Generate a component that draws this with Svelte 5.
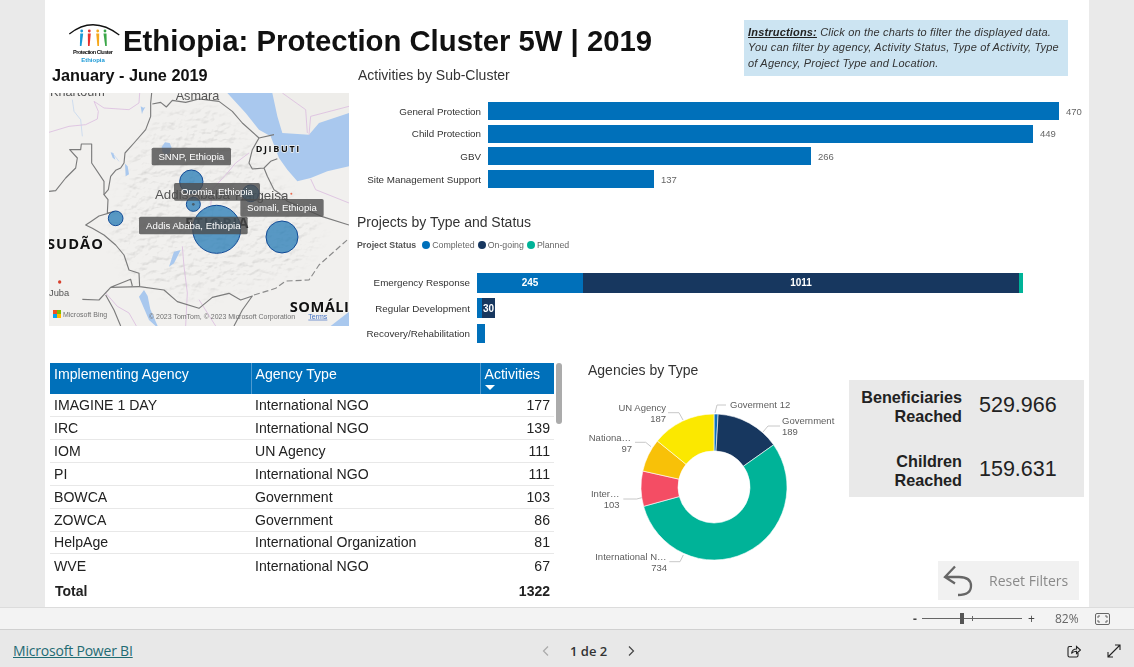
<script>
  const activities = [
    { label: 'General Protection', value: 470, width: 571 },
    { label: 'Child Protection', value: 449, width: 545 },
    { label: 'GBV', value: 266, width: 323 },
    { label: 'Site Management Support', value: 137, width: 166 }
  ];
  const projects = [
    { label: 'Emergency Response', parts: [['c', 106, '245'], ['o', 436, '1011'], ['p', 4, '']] },
    { label: 'Regular Development', parts: [['c', 5, ''], ['o', 13, '30']] },
    { label: 'Recovery/Rehabilitation', parts: [['c', 8, '']] }
  ];
  const agencies = [
    ['IMAGINE 1 DAY', 'International NGO', 177],
    ['IRC', 'International NGO', 139],
    ['IOM', 'UN Agency', 111],
    ['PI', 'International NGO', 111],
    ['BOWCA', 'Government', 103],
    ['ZOWCA', 'Government', 86],
    ['HelpAge', 'International Organization', 81],
    ['WVE', 'International NGO', 67]
  ];
  const slices = [
    [12, '#0f6fb8'], [189, '#17375f'], [734, '#00b398'],
    [103, '#f44d64'], [97, '#f8c108'], [187, '#fbe800']
  ];
  const total = slices.reduce((s, x) => s + x[0], 0);
  function arc(a0, a1) {
    const R = 73, r = 36, cx = 134, cy = 97;
    const p = (rad, a) => `${(cx + rad * Math.sin(a)).toFixed(2)} ${(cy - rad * Math.cos(a)).toFixed(2)}`;
    const large = a1 - a0 > Math.PI ? 1 : 0;
    return `M${p(R, a0)}A${R} ${R} 0 ${large} 1 ${p(R, a1)}L${p(r, a1)}A${r} ${r} 0 ${large} 0 ${p(r, a0)}Z`;
  }
  let acc = 0;
  const segs = slices.map(([v, c]) => {
    const a0 = (acc / total) * Math.PI * 2;
    acc += v;
    return { d: arc(a0, (acc / total) * Math.PI * 2), c };
  });
  const donutLabels = [
    ['start', 150, 18, 'Goverment 12'], ['start', 202, 34, 'Government'], ['start', 202, 45, '189'],
    ['end', 86, 21, 'UN Agency'], ['end', 86, 32, '187'],
    ['end', 51, 51, 'Nationa…'], ['end', 52, 62, '97'],
    ['end', 39.5, 107, 'Inter…'], ['end', 39.5, 118, '103'],
    ['end', 86.5, 170, 'International N…'], ['end', 87, 181, '734']
  ];
  const leaders = [
    '135,23 137,15 146,15', '183,42 188,36 200,36', '103,30 99,22.7 88,22.7',
    '71,56.7 65.7,52.3 55,52.3', '61.7,107.7 56.7,109 43.3,109', '103.3,165 100,171.7 89.3,171.7'
  ];
  const bubbles = [
    [427, 266, 35], [433, 334, 21], [605, 301, 25], [200, 376, 22], [503, 409, 72], [699, 432, 48]
  ];
  const mapLabels = [
    [308, 164, 238, 'SNNP, Ethiopia'], [375, 270, 258, 'Oromia, Ethiopia'],
    [574, 318, 250, 'Somali, Ethiopia'], [270, 371, 326, 'Addis Ababa, Ethiopia']
  ];
  const people = [[81.7, '#1b9ad6', -1], [89.3, '#e8312f', -.5], [97.7, '#f5a81c', .5], [105, '#3aa648', 1]];
</script>

<div class="canvas">
  <div class="upper">
    <div class="brand">
      <svg class="logo" viewBox="66 22 56 42" width="56" height="42">
        <path d="M69.300 34Q93 15 119.300 35" fill="none" stroke="#111" stroke-width="1.300" />
        {#each people as [x, c, t]}
          <circle cx={x} cy="31" r="1.400" fill={c} />
          <path d={`M${x - 1.5} 33.500h3L${x + t + .8} 46h-1.600Z`} fill={c} />
        {/each}
        <text x="93" y="54" class="logo-a" textLength="40">Protection Cluster</text>
        <text x="93" y="62" class="logo-b">Ethiopia</text>
      </svg>
      <h1>Ethiopia: Protection Cluster 5W | 2019</h1>
    </div>

    <div class="instructions">
      <b>Instructions:</b> Click on the charts to filter the displayed data. You can filter by agency, Activity Status, Type of Activity, Type of Agency, Project Type and Location.
    </div>

    <div class="date">January - June 2019</div>
    <h2 class="sub-title">Activities by Sub-Cluster</h2>

    <svg class="map" viewBox="0 0 300 233" width="300" height="233">
      <defs>
        <filter id="relief" x="0" y="0" width="100%" height="100%">
          <feTurbulence type="fractalNoise" baseFrequency="0.035 0.05" numOctaves="5" seed="11" />
          <feDiffuseLighting surfaceScale="3" lighting-color="#fff" diffuseConstant="1.180">
            <feDistantLight azimuth="235" elevation="58" />
          </feDiffuseLighting>
        </filter>
        <filter id="soft"><feGaussianBlur stdDeviation="22" /></filter>
        <mask id="high">
          <path d="M250 190L340 60 480 40 570 110 640 220 700 290 820 400 760 520 600 580 400 620 240 540 190 420 220 300Z" fill="#fff" filter="url(#soft)" />
        </mask>
      </defs>
      <rect width="300" height="233" fill="#f1f0ee" />
      <g transform="scale(.33333)">
        <rect width="900" height="699" class="relief" filter="url(#relief)" mask="url(#high)" />
        <path d="M535 0L590 60 630 110 665 130 690 195 715 230 745 265 785 255 835 235 900 220V0Z" fill="#a9c8ee" />
        <path d="M670 0L685 70 700 120 780 125 810 90 900 60V0Z" fill="#eeedea" />
        <path d="M900 656L845 699H900Z" fill="#a9c8ee" />
        <path d="M338 162l10-14 14 2 6 14-6 16-12 6-10-10Z M285 591l-15 20 30 70 20 18h6l-22-50-8-40Z M375 476l20-5-20 40-15 10Z M185 178l8 2 6 20-8-6Z M228 212l8 8 4 24-10 6Z M275 40l8 4 6-2-8 14-2 8Z" fill="#a9c8ee" />
        <g fill="none" stroke="#bcd2ee" stroke-width="2">
          <path d="M70 20L75 55 95 80 100 130M190 180L210 205" />
        </g>
        <g fill="none" stroke="#dcbfe0" stroke-width="2.600" stroke-linejoin="round">
          <path d="M0 118L60 100 110 95 145 78 148 55 135 25 165 45 240 50 270 30 272 0" />
          <path d="M700 0L770 50 775 120M780 125L785 70 900 40" />
          <path d="M785 258L800 290 900 330M600 180L560 210 535 240 490 290 485 340" />
          <path d="M400 460L405 520 415 600 410 699M450 620L500 699" />
          <path d="M170 600L205 640 240 660 262 699" />
        </g>
        <g fill="none" stroke="#7b7b7b" stroke-width="3.400" stroke-linejoin="round">
          <path d="M308 0L305 30 305 70 290 110 255 150 228 180 225 210 215 225 200 232 185 250 178 290 165 305 177 320 175 360 195 356 150 369 125 386 110 396 130 406 165 426 200 456 225 486 240 531 270 541 272 581 345 591 385 626 450 646 490 613 540 601 575 621 610 609 580 651 555 699" />
          <path d="M0 295L20 293 50 255 80 225 85 195 62 170 95 170 97 153 128 153 128 210 165 265 165 305" />
          <path d="M272 581L185 583 150 621 100 619M170 606L195 651 215 699M185 583L245 559 250 579" />
          <path d="M310 33L335 28 352 42 370 22 410 28 450 18 510 25 550 55 580 90 630 135 675 125M630 135L610 170 600 210 610 228 645 225 665 205 685 197M645 225L655 250 675 290 690 300 715 325 820 371 900 396" />
          <path d="M615 606L680 586 710 564 780 561 810 516 900 436" stroke-dasharray="18 9" stroke="#8a8a8a" />
        </g>
        <g class="map-place">
          <text x="3" y="10" class="large">Khartoum</text>
          <text x="380" y="20" class="large">Asmara</text>
          <text x="318" y="317" class="city">Addis Ababa</text>
          <text x="558" y="320" class="city">Hargeisa</text>
          <text x="0" y="609" class="small">Juba</text>
          <text x="620" y="177" class="country dj">DJIBUTI</text>
          <text x="-6" y="469" class="country">SUDÃO</text>
          <text x="408" y="406" class="country">ETIOPIA</text>
          <text x="722" y="656" class="country tight">SOMÁLI</text>
        </g>
        <circle cx="32" cy="567" r="5" fill="#d8402c" />
        <circle cx="727" cy="302" r="3" fill="#e86a50" />
        {#each bubbles as [x, y, r]}
          <circle cx={x} cy={y} {r} fill="#0f6fb0" fill-opacity=".68" stroke="#124a96" stroke-width="3" />
        {/each}
        <circle cx="433" cy="334" r="4" fill="#444" fill-opacity=".7" />
        {#each mapLabels as [x, y, w, t]}
          <rect {x} {y} width={w} height="53" rx="5" fill="#4c4c4c" fill-opacity=".8" />
          <text x={x + w / 2} y={y + 36} class="pin">{t}</text>
        {/each}
        <rect x="12" y="651" width="12" height="12" fill="#f25022" />
        <rect x="24" y="651" width="12" height="12" fill="#7fba00" />
        <rect x="12" y="663" width="12" height="12" fill="#00a4ef" />
        <rect x="24" y="663" width="12" height="12" fill="#ffb900" />
        <text x="42" y="671" class="attr">Microsoft Bing</text>
        <text x="300" y="677" class="attr">© 2023 TomTom, © 2023 Microsoft Corporation</text>
        <text x="778" y="677" class="attr terms">Terms</text>
      </g>
    </svg>

    <div class="charts">
      <div class="hbars">
        {#each activities as a}
          <div class="hrow">
            <span class="hlabel">{a.label}</span>
            <span class="hbar" style="width:{a.width}px"></span>
            <span class="hval">{a.value}</span>
          </div>
        {/each}
      </div>

      <h2 class="proj-title">Projects by Type and Status</h2>
      <div class="legend">
        <b>Project Status</b>
        <span class="key"><i class="c"></i>Completed</span>
        <span class="key"><i class="o"></i>On-going</span>
        <span class="key"><i class="p"></i>Planned</span>
      </div>
      <div class="stack">
        {#each projects as p}
          <div class="srow">
            <span class="slabel">{p.label}</span>
            {#each p.parts as [k, w, t]}
              <span class="seg {k}" style="width:{w}px">{t}</span>
            {/each}
          </div>
        {/each}
      </div>
    </div>
  </div>

  <div class="lower">
    <div class="table-wrap">
      <table>
        <colgroup><col class="c1" /><col class="c2" /><col class="c3" /></colgroup>
        <thead>
          <tr>
            <th>Implementing Agency</th>
            <th>Agency Type</th>
            <th>Activities<span class="sort"></span></th>
          </tr>
        </thead>
        <tbody>
          {#each agencies as [n, t, v]}
            <tr><td>{n}</td><td>{t}</td><td class="num">{v}</td></tr>
          {/each}
        </tbody>
        <tfoot>
          <tr><td>Total</td><td></td><td class="num">1322</td></tr>
        </tfoot>
      </table>
      <div class="scroll"></div>
    </div>

    <div class="donut">
      <h2>Agencies by Type</h2>
      <svg viewBox="0 0 270 190" width="270" height="190">
        {#each segs as s}
          <path d={s.d} fill={s.c} stroke="#fff" stroke-width=".6" />
        {/each}
        {#each leaders as l}
          <polyline points={l} fill="none" stroke="#c8c8c8" stroke-width="1" />
        {/each}
        {#each donutLabels as [a, x, y, t]}
          <text {x} {y} text-anchor={a} class="dl">{t}</text>
        {/each}
      </svg>
    </div>

    <div class="side">
      <div class="kpis">
        <div class="kpi"><div class="kl">Beneficiaries Reached</div><div class="kv">529.966</div></div>
        <div class="kpi"><div class="kl">Children Reached</div><div class="kv">159.631</div></div>
      </div>
      <button class="reset">
        <svg viewBox="0 0 32 32" width="32" height="32">
          <path d="M13 1.500L3 12l10 6.500M3 12h14Q29 12 29 21T16 30" fill="none" stroke="#666" stroke-width="2.300" />
        </svg>
        <span>Reset Filters</span>
      </button>
    </div>
  </div>
</div>

<div class="zoombar">
  <span class="zm">-</span>
  <div class="slider"><i class="thumb"></i><i class="tick"></i></div>
  <span class="zp">+</span>
  <span class="pct">82%</span>
  <svg class="fit" viewBox="0 0 15 12" width="15" height="12">
    <rect x=".5" y=".5" width="14" height="11" rx="1.500" fill="none" stroke="#666" />
    <path d="M3 5V3h2M12 5V3h-2M3 7v2h2M12 7v2h-2" fill="none" stroke="#666" />
  </svg>
</div>

<div class="footer">
  <a href="#top" class="pbi">Microsoft Power BI</a>
  <div class="pager">
    <svg viewBox="0 0 10 12" width="10" height="12"><path d="M7 1.500L2.500 6 7 10.500" fill="none" stroke="#aaa" stroke-width="1.200" /></svg>
    <span>1 de 2</span>
    <svg viewBox="0 0 10 12" width="10" height="12"><path d="M3 1.500L7.500 6 3 10.500" fill="none" stroke="#444" stroke-width="1.200" /></svg>
  </div>
  <div class="actions">
    <svg viewBox="0 0 14 14" width="14" height="14"><path d="M5 2.500H2.500a1.500 1.500 0 0 0-1.500 1.500v7.500a1.500 1.500 0 0 0 1.500 1.500h7a1.500 1.500 0 0 0 1.500-1.500V9M4.500 9.500c.5-3 2.500-4.500 5-4.500V2.500L13.500 6 9.500 9.500V7.200c-2 0-3.700.6-5 2.300Z" fill="none" stroke="#222" stroke-width="1.100" /></svg>
    <svg viewBox="0 0 14 14" width="14" height="14"><path d="M1 13L13 1M8 1h5v5M1 8v5h5" fill="none" stroke="#222" stroke-width="1.100" /></svg>
  </div>
</div>

<style>
  :global(body) {
    margin: 0;
    background: #eaeaea;
    font-family: "Liberation Sans", Arial, sans-serif;
    overflow: hidden;
  }
  h1, h2 { margin: 0; font-weight: normal; }

  .canvas {
    width: 1044px;
    height: 607px;
    margin-left: 45px;
    background: #fff;
    overflow: hidden;
  }
  .upper {
    height: 345px;
    display: grid;
    grid-template-columns: 312px 387px 345px;
    grid-template-rows: 66px 22px 257px;
  }
  .brand {
    grid-column: 1 / 3;
    grid-row: 1;
    display: flex;
    align-items: flex-start;
    padding: 22px 0 0 21px;
    box-sizing: border-box;
  }
  .logo { flex: none; }
  .logo-a { font-size: 5.600px; text-anchor: middle; fill: #111; font-weight: bold; }
  .logo-b { font-size: 6px; text-anchor: middle; fill: #1b9ad6; font-weight: bold; }
  h1 {
    font-size: 29.300px;
    font-weight: bold;
    line-height: 36px;
    margin: 1px 0 0 1px;
    color: #111;
    white-space: nowrap;
  }
  .instructions {
    grid-column: 3;
    grid-row: 1 / 3;
    margin-top: 20px;
    width: 324px;
    height: 56px;
    box-sizing: border-box;
    padding: 5px 4px;
    background: #cce4f2;
    font-size: 11px;
    line-height: 15.400px;
    font-style: italic;
    color: #333;
    letter-spacing: .18px;
  }
  .instructions b { text-decoration: underline; color: #222; }
  .date {
    grid-column: 1;
    grid-row: 2;
    padding-left: 7px;
    font-size: 16.300px;
    line-height: 18px;
    font-weight: bold;
    color: #111;
  }
  .sub-title {
    grid-column: 2;
    grid-row: 2;
    padding: 1px 0 0 1px;
    font-size: 14px;
    line-height: 16px;
    color: #333;
  }
  .map {
    grid-column: 1;
    grid-row: 3;
    margin: 5px 0 0 4px;
    display: block;
  }
  .map text { font-family: "Liberation Sans", Arial, sans-serif; }
  .relief { mix-blend-mode: multiply; }
  .map-place .large { font-size: 38px; fill: #555; }
  .map-place .city { font-size: 40px; fill: #555; }
  .map-place .small { font-size: 28px; fill: #555; }
  .map-place .country {
    font-size: 44px;
    font-weight: bold;
    fill: #111;
    font-family: "Open Sans", sans-serif;
    letter-spacing: 3px;
    paint-order: stroke;
    stroke: #f4f4f2;
    stroke-width: 4px;
  }
  .map-place .dj { font-size: 27px; letter-spacing: 5px; }
  .map-place .tight { letter-spacing: 1.500px; }
  .pin { font-size: 29px; fill: #fff; text-anchor: middle; }
  .attr { font-size: 21px; fill: #707070; }
  .terms { fill: #4472c4; text-decoration: underline; }

  .charts {
    grid-column: 2 / 4;
    grid-row: 3;
    min-width: 0;
  }
  .hbars {
    padding-top: 14px;
    display: flex;
    flex-direction: column;
    gap: 4.700px;
  }
  .hrow, .srow { display: flex; align-items: center; }
  .hlabel {
    width: 124px;
    margin-right: 7px;
    font-size: 9.800px;
    text-align: right;
    color: #333;
    white-space: nowrap;
    flex: none;
  }
  .hbar { height: 18px; background: #0070ba; }
  .hval { margin-left: 7px; font-size: 9.500px; color: #666; }
  .proj-title {
    margin-top: 26px;
    font-size: 14px;
    line-height: 16px;
    color: #333;
  }
  .legend {
    display: flex;
    align-items: center;
    margin-top: 8px;
    font-size: 8.800px;
    line-height: 14px;
    color: #666;
    gap: 3px;
  }
  .legend b { color: #555; margin-right: 3px; }
  .key { display: flex; align-items: center; gap: 2px; }
  .key i { width: 8px; height: 8px; border-radius: 50%; }
  .key .c { background: #0070ba; }
  .key .o { background: #17375f; }
  .key .p { background: #00b398; }
  .stack {
    margin-top: 21px;
    display: flex;
    flex-direction: column;
    gap: 5.800px;
  }
  .srow { height: 19.500px; }
  .slabel {
    width: 113px;
    margin-right: 7px;
    flex: none;
    text-align: right;
    font-size: 9.800px;
    color: #333;
    white-space: nowrap;
  }
  .seg {
    height: 100%;
    color: #fff;
    font-size: 10px;
    font-weight: bold;
    display: flex;
    align-items: center;
    justify-content: center;
    overflow: hidden;
  }
  .seg.c { background: #0070ba; }
  .seg.o { background: #17375f; }
  .seg.p { background: #00b398; }

  .lower {
    height: 262px;
    display: flex;
  }
  .table-wrap {
    flex: none;
    width: 535px;
    padding: 18px 0 0 5px;
    box-sizing: border-box;
    position: relative;
  }
  table {
    width: 504px;
    table-layout: fixed;
    border-collapse: collapse;
    font-size: 14.100px;
    color: #222;
  }
  .c1 { width: 201px; }
  .c2 { width: 229px; }
  .c3 { width: 74px; }
  th {
    height: 31px;
    padding: 3px 4px 0;
    box-sizing: border-box;
    background: #0070ba;
    color: #fff;
    font-weight: normal;
    text-align: left;
    vertical-align: top;
    line-height: 17px;
    border-left: 1px solid #4e9ad0;
    position: relative;
  }
  th:first-child { border-left: none; }
  .sort {
    position: absolute;
    left: 4px;
    bottom: 4px;
    border: 5px solid transparent;
    border-top: 5px solid #fff;
    border-bottom: 0;
  }
  td {
    height: 22.850px;
    padding: 0 4px;
    box-sizing: border-box;
    border-bottom: 1px solid #e8e8e8;
    white-space: nowrap;
    line-height: 20px;
  }
  tbody tr:last-child td { border-bottom: none; }
  .num { text-align: right; padding-right: 4px; }
  tfoot td {
    height: 26px;
    padding-top: 3px;
    border: none;
    font-weight: bold;
    font-size: 14px;
  }
  tfoot tr td:first-child { padding-left: 5px; }
  .scroll {
    position: absolute;
    left: 511px;
    top: 18px;
    width: 6px;
    height: 61px;
    border-radius: 3px;
    background: #ababab;
  }

  .donut {
    flex: none;
    width: 269px;
    padding-top: 17px;
  }
  .donut h2 {
    padding-left: 8px;
    font-size: 14px;
    line-height: 16px;
    color: #333;
  }
  .donut svg { display: block; margin-top: 12px; overflow: visible; }
  .dl { font-size: 9.500px; fill: #5e5e5e; font-family: "Liberation Sans", Arial, sans-serif; }

  .side {
    flex: none;
    width: 235px;
    padding-top: 35px;
  }
  .kpis {
    height: 117px;
    background: #e9e9e9;
    display: flex;
    flex-direction: column;
    padding: 8px 0;
    box-sizing: border-box;
    gap: 26px;
  }
  .kpi { display: flex; align-items: center; }
  .kl {
    width: 113px;
    text-align: right;
    font-size: 16.200px;
    line-height: 19px;
    font-weight: bold;
    color: #222;
  }
  .kv { margin: -3px 0 0 17px; font-size: 21.500px; color: #222; }
  .reset {
    display: flex;
    align-items: center;
    width: 141px;
    height: 39px;
    margin: 64px 0 0 89px;
    padding: 0 0 0 4px;
    background: #f1f1f1;
    border: none;
    font-family: "Open Sans", sans-serif;
    font-size: 14px;
    color: #8a8a8a;
  }
  .reset span { margin-left: 15px; white-space: nowrap; }

  .zoombar {
    height: 23px;
    box-sizing: border-box;
    background: #f3f3f3;
    border-top: 1px solid #dcdcdc;
    border-bottom: 1px solid #d0d0d0;
    display: flex;
    align-items: center;
    padding-left: 913px;
    color: #444;
    font-family: "Open Sans", sans-serif;
    font-size: 12px;
  }
  .zm { width: 9px; font-weight: bold; }
  .slider {
    width: 100px;
    height: 1px;
    background: #666;
    position: relative;
  }
  .thumb {
    position: absolute;
    left: 38px;
    top: -5px;
    width: 4px;
    height: 11px;
    background: #555;
  }
  .tick {
    position: absolute;
    left: 50px;
    top: -2px;
    width: 1px;
    height: 5px;
    background: #666;
  }
  .zp { margin-left: 6px; width: 21px; }
  .pct { margin-left: 6px; width: 40px; color: #666; }
  .fit { flex: none; }

  .footer {
    height: 37px;
    background: #e8e8e8;
    display: flex;
    align-items: center;
    position: relative;
    padding: 4px 13px 0;
    box-sizing: border-box;
  }
  .pbi {
    color: #1f6b73;
    font-size: 14px;
    font-family: "Open Sans", sans-serif;
    letter-spacing: -.2px;
    font-weight: 500;
  }
  .pager {
    position: absolute;
    left: 541px;
    top: 12px;
    display: flex;
    align-items: center;
    gap: 19px;
    font-size: 13px;
    font-family: "Open Sans", sans-serif;
    font-weight: 600;
    color: #333;
  }
  .actions {
    margin-left: auto;
    display: flex;
    gap: 26px;
  }
</style>
